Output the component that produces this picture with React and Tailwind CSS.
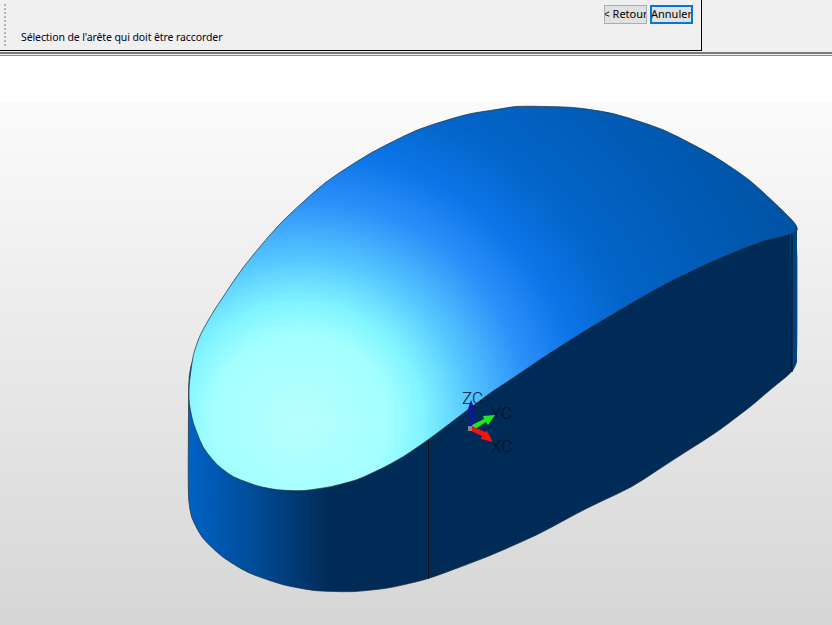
const topPts = [[189,385],[193,355],[200,335],[213,312],[243,267],[280,223],[325,182],[370,153],[418,129],[467,114],[500,109],[517,106],[573,107],[613,113],[663,129],[713,155],[750,180],[780,208],[795,223],[798,230],[792,234],[760,242],[713,261],[667,283],[630,304],[583,332],[547,355],[507,382],[490,393],[428,440],[403,457],[383,468],[357,480],[330,487],[303,491],[277,490],[257,486],[233,477],[217,465],[203,448],[193,423],[189,403]];
const wallPts = [[189,340],[188,495],[191,517],[202,538],[222,557],[248,573],[283,585],[315,591],[353,592],[390,588],[428,579],[487,557],[537,535],[587,508],[632,487],[673,460],[717,432],[750,407],[770,390],[792,372],[797,362],[797,215],[700,200],[300,340]];

function smooth(pts) {
  const n = pts.length;
  const lerp = (a, b, t) => [a[0] + (b[0] - a[0]) * t, a[1] + (b[1] - a[1]) * t];
  let d = "";
  pts.forEach((p, i) => {
    const a = lerp(p, pts[(i - 1 + n) % n], 0.3);
    const b = lerp(p, pts[(i + 1) % n], 0.3);
    d += `${i === 0 ? "M" : "L"}${a[0]} ${a[1]} Q${p[0]} ${p[1]} ${b[0]} ${b[1]} `;
  });
  return d + "Z";
}

function Button({ children, focused }) {
  return (
    <div
      className={
        focused
          ? "w-[43px] h-[19px] bg-[#e1e1e1] border-2 border-[#0078d7] flex items-center justify-center text-[11px] text-black overflow-hidden whitespace-nowrap"
          : "w-[43px] h-[19px] bg-[#e1e1e1] border border-[#adadad] flex items-center justify-center text-[11px] text-black overflow-hidden whitespace-nowrap"
      }
    >
      {children}
    </div>
  );
}

export default function App() {
  return (
    <div className="w-[832px] h-[625px] overflow-hidden flex flex-col bg-white font-['Noto_Sans',sans-serif]">
      <div className="h-[52px] bg-[#f0f0f0] flex shrink-0">
        <div className="w-[702px] h-[51px] border-r border-b border-black pl-[4px] flex">
          <div className="w-[3px] my-[4px] border-l-2 border-dotted border-[#b4b4b4]" />
          <div className="flex-1 flex flex-col pl-[14px]">
            <div className="flex justify-end gap-[3px] pt-[5px] pr-[8px]">
              <Button>&lt; Retour</Button>
              <Button focused>Annuler</Button>
            </div>
            <div className="mt-[6px] text-[10.5px] leading-[14px] text-[#000020] whitespace-nowrap tracking-[-0.1px]">
              Sélection de l'arête qui doit être raccorder
            </div>
          </div>
        </div>
      </div>
      <div className="h-[2px] bg-[#7a7a7a] shrink-0" />
      <div className="h-px bg-[#f0f0f0] shrink-0" />
      <div className="h-px bg-[#8a8a8a] shrink-0" />
      <div className="flex-1 bg-[linear-gradient(to_bottom,#ffffff_0,#ffffff_45px,#fbfbfb_46px,#d6d6d6_100%)]">
        <svg width="832" height="569" viewBox="0 56 832 569" className="block">
          <defs>
            <radialGradient
              id="topShade"
              gradientUnits="userSpaceOnUse"
              cx="300"
              cy="420"
              r="560"
              gradientTransform="translate(300 420) scale(1.05 1) translate(-300 -420)"
            >
              <stop offset="0" stopColor="#b8ffff" />
              <stop offset="0.15" stopColor="#a4ffff" />
              <stop offset="0.21" stopColor="#80f4ff" />
              <stop offset="0.29" stopColor="#55c6ff" />
              <stop offset="0.39" stopColor="#2c90f8" />
              <stop offset="0.48" stopColor="#0c76e8" />
              <stop offset="0.59" stopColor="#0364c8" />
              <stop offset="0.85" stopColor="#0056aa" />
              <stop offset="1" stopColor="#004e9c" />
            </radialGradient>
            <linearGradient id="wallShade" gradientUnits="userSpaceOnUse" x1="190" y1="0" x2="330" y2="0">
              <stop offset="0" stopColor="#0062c4" />
              <stop offset="0.45" stopColor="#004c98" />
              <stop offset="1" stopColor="#002b56" />
            </linearGradient>
          </defs>
          <path d={smooth(wallPts)} fill="url(#wallShade)" stroke="#1c2c3c" strokeWidth="0.7" />
          <polygon points="790,226 797,226 797,362 792,372" fill="#00437f" />
          <line x1="428.5" y1="440" x2="428.5" y2="579" stroke="#0a0f1a" strokeWidth="1" />
          <line x1="792" y1="233" x2="792" y2="372" stroke="#0a0f1a" strokeWidth="1" />
          <path d={smooth(topPts)} fill="url(#topShade)" stroke="#1c2c3c" strokeWidth="0.7" />

          {/* triad */}
          <polygon points="469,425 469,412 467,412 471,400 476,412 474,412 474,425" fill="#0a1a9c" />
          <polygon points="472,425 484,419 483,416 495,415 488,425 486,422 474,430" fill="#22e61e" />
          <polygon points="472,426 485,432 487,431 493,442 481,439 482,436 471,431" fill="#f01414" />
          <rect x="468" y="426" width="4" height="5" fill="#808890" />
          <g fill="#06101c" fontSize="17" className="font-['Roboto',sans-serif] font-light">
            <text x="462" y="404">ZC</text>
            <text x="491" y="419">YC</text>
            <text x="491" y="452">XC</text>
          </g>
        </svg>
      </div>
    </div>
  );
}
